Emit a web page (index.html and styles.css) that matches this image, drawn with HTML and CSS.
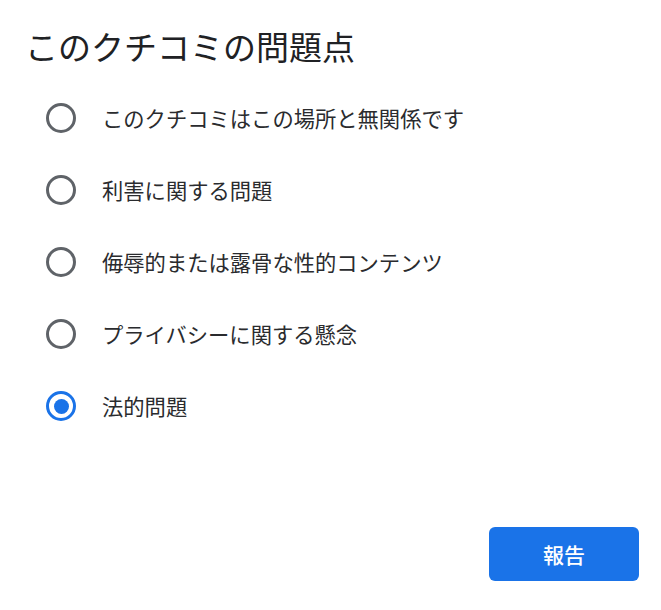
FILE: index.html
```html
<!DOCTYPE html>
<html lang="ja">
<head>
<meta charset="utf-8">
<link rel="stylesheet" href="styles.css">
</head>
<body>
<div class="dialog">
  <h1 class="title">このクチコミの問題点</h1>
  <div class="options">
    <label class="option"><span class="radio"></span><span class="label">このクチコミはこの場所と無関係です</span></label>
    <label class="option"><span class="radio"></span><span class="label">利害に関する問題</span></label>
    <label class="option"><span class="radio"></span><span class="label">侮辱的または露骨な性的コンテンツ</span></label>
    <label class="option"><span class="radio"></span><span class="label">プライバシーに関する懸念</span></label>
    <label class="option"><span class="radio checked"></span><span class="label">法的問題</span></label>
  </div>
  <div class="actions">
    <button class="report">報告</button>
  </div>
</div>
</body>
</html>
```

FILE: styles.css
```css
html, body {
  margin: 0;
  padding: 0;
  background: #ffffff;
}
body {
  font-family: "Noto Sans CJK JP", "Noto Sans", sans-serif;
  color: #202124;
}
.dialog {
  width: 661px;
  height: 610px;
  box-sizing: border-box;
  padding: 26px 22px 0 27px;
  display: flex;
  flex-direction: column;
}
.title {
  margin: 0 0 0 -2px;
  font-size: 33px;
  font-weight: 400;
  line-height: 40px;
  color: #202124;
}
.options {
  margin-top: 16px;
  display: flex;
  flex-direction: column;
}
.option {
  height: 72px;
  display: flex;
  align-items: center;
  padding-left: 19px;
}
.radio {
  width: 30px;
  height: 30px;
  box-sizing: border-box;
  border: 3px solid #5f6368;
  border-radius: 50%;
  display: flex;
  align-items: center;
  justify-content: center;
  flex: none;
}
.radio.checked {
  border-color: #1a73e8;
}
.radio.checked::after {
  content: "";
  width: 15px;
  height: 15px;
  border-radius: 50%;
  background: #1a73e8;
}
.label {
  margin-left: 26px;
  font-size: 21.3px;
  line-height: 30px;
  color: #2a2b2e;
}
.actions {
  margin-top: 85px;
  display: flex;
  justify-content: flex-end;
}
.report {
  width: 150px;
  height: 54px;
  border: none;
  border-radius: 6px;
  background: #1a73e8;
  color: #ffffff;
  font-family: "Noto Sans CJK JP", "Noto Sans", sans-serif;
  font-size: 21px;
  font-weight: 500;
  cursor: pointer;
}
```
